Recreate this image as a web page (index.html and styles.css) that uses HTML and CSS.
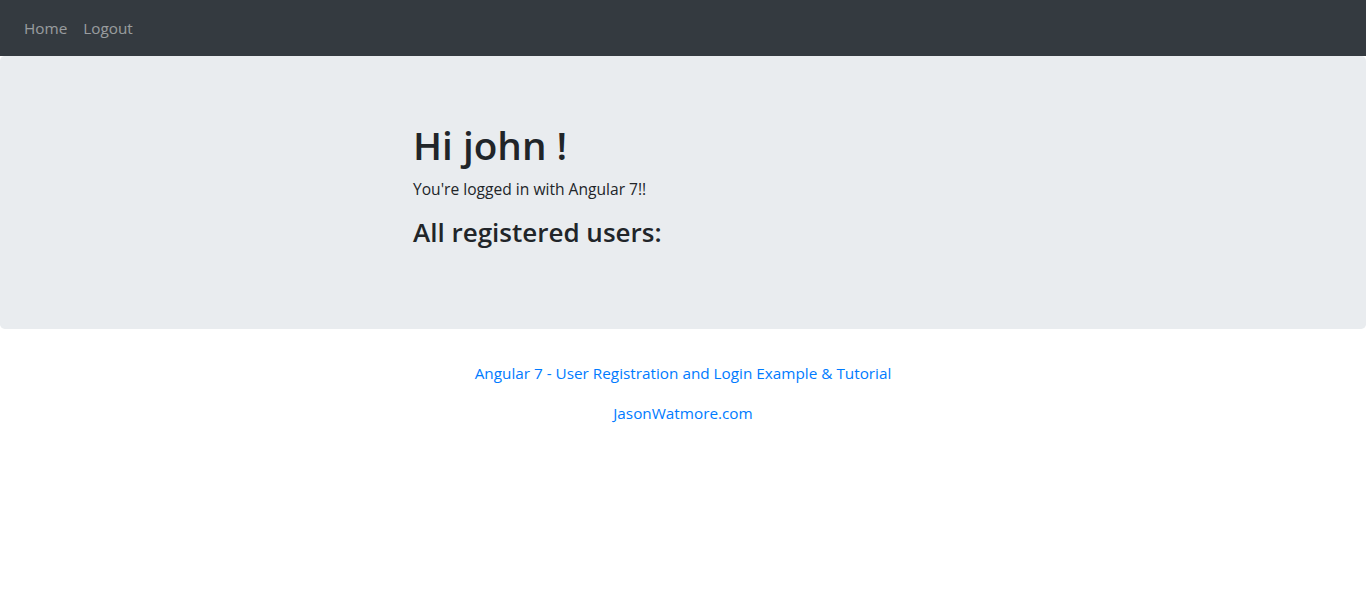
FILE: index.html
```html
<!DOCTYPE html>
<html lang="en">
<head>
<meta charset="utf-8">
<title>Angular 7 User Registration and Login</title>
<link rel="stylesheet" href="styles.css">
</head>
<body>
<nav class="navbar">
  <div class="navbar-nav">
    <a class="nav-link" href="#">Home</a>
    <a class="nav-link" href="#">Logout</a>
  </div>
</nav>
<div class="jumbotron">
  <div class="container">
    <div class="row">
      <div class="col">
        <h1>Hi john !</h1>
        <p class="lead-text">You're logged in with Angular 7!!</p>
        <h3>All registered users:</h3>
      </div>
    </div>
  </div>
</div>
<div class="credits">
  <p><a href="#">Angular 7 - User Registration and Login Example &amp; Tutorial</a></p>
  <p><a href="#">JasonWatmore.com</a></p>
</div>
</body>
</html>
```
FILE: styles.css
```css
* { box-sizing: border-box; }
html, body { margin: 0; }
body {
  font-family: "Segoe UI", "Open Sans", "Noto Sans", sans-serif;
  font-size: 15.3px;
  line-height: 24px;
  color: #212529;
  background: #fff;
}
a { text-decoration: none; }
.navbar {
  background: #343a40;
  padding: 8px 16px;
  display: flex;
  align-items: center;
}
.navbar-nav { display: flex; }
.nav-link {
  display: block;
  padding: 8px;
  color: rgba(255,255,255,.5);
}
.jumbotron {
  background: #e9ecef;
  border-radius: 4.8px;
  padding: 65px 32px 71px;
  margin-bottom: 32px;
}
.container {
  max-width: 1140px;
  margin: 0 auto;
  padding: 0 15px;
}
.row { display: flex; margin: 0 -15px; }
.col {
  width: 50%;
  margin-left: 25%;
  padding: 0 15px;
}
h1, h3 { margin: 0 0 8px; font-weight: 600; }
h1 { font-size: 38.7px; line-height: 48px; }
h3 { font-size: 26px; line-height: 33.6px; margin-top: 1px; }
p { margin: 0 0 16px; }
.lead-text { font-size: 15.6px; margin-bottom: 15px; }
.credits { text-align: center; }
.credits a { color: #007bff; }
```
